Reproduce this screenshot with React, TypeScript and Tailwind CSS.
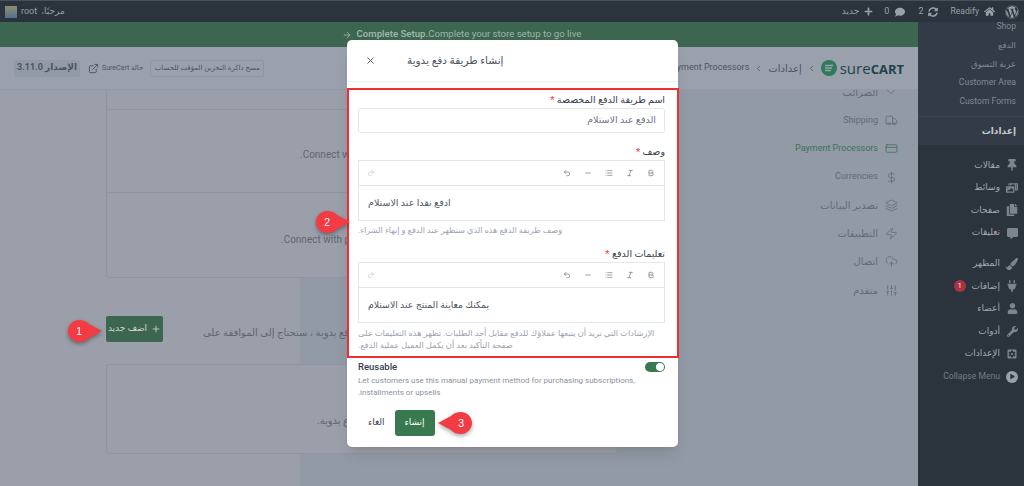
import { ArrowRight, Bold, CreditCard, DollarSign, ExternalLink, Italic, Layers, List, Minus, Plus, Redo2, SlidersVertical, Truck, Undo2, UploadCloud, X, Zap, ChevronLeft, ChevronDown } from 'lucide-react';
import { FaComment, FaCopy, FaHome, FaPaintBrush, FaPlay, FaPlug, FaPlus, FaPhotoVideo, FaSyncAlt, FaThumbtack, FaUser, FaWordpress, FaWrench, FaCommentAlt } from 'react-icons/fa';
import { MdSettingsApplications } from 'react-icons/md';

const font = 'font-["Roboto","DejaVu_Sans",sans-serif]';

const subMenu = [
  { label: 'Shop', cls: 'text-[8.6px]' },
  { label: 'الدفع', cls: 'text-[8.5px]' },
  { label: 'عربة التسوق', cls: 'text-[8.5px]' },
  { label: 'Customer Area', cls: 'text-[8.6px]' },
  { label: 'Custom Forms', cls: 'text-[8.6px]' },
];

const mainMenu = [
  { label: 'مقالات', icon: <FaThumbtack size={12} />, gap: false },
  { label: 'وسائط', icon: <FaPhotoVideo size={12} />, gap: false },
  { label: 'صفحات', icon: <FaCopy size={12} />, gap: false },
  { label: 'تعليقات', icon: <FaCommentAlt size={11} />, gap: false },
  { label: 'المظهر', icon: <FaPaintBrush size={12} />, gap: true },
  { label: 'إضافات', icon: <FaPlug size={12} />, gap: false, badge: true },
  { label: 'أعضاء', icon: <FaUser size={11} />, gap: false },
  { label: 'أدوات', icon: <FaWrench size={11} />, gap: false },
  { label: 'الإعدادات', icon: <MdSettingsApplications size={14} />, gap: false },
];

const navItems = [
  { label: 'الضرائب', icon: <ChevronDown size={16} strokeWidth={1.4} /> },
  { label: 'Shipping', icon: <Truck size={13} strokeWidth={1.5} />, latin: true },
  { label: 'Payment Processors', icon: <CreditCard size={13} strokeWidth={1.5} />, active: true, latin: true },
  { label: 'Currencies', icon: <DollarSign size={13} strokeWidth={1.5} />, latin: true },
  { label: 'تصدير البيانات', icon: <Layers size={13} strokeWidth={1.5} /> },
  { label: 'التطبيقات', icon: <Zap size={13} strokeWidth={1.5} /> },
  { label: 'اتصال', icon: <UploadCloud size={13} strokeWidth={1.5} /> },
  { label: 'متقدم', icon: <SlidersVertical size={13} strokeWidth={1.5} /> },
];

function Toolbar() {
  return (
    <div className="flex items-center h-[25px] border-b border-[#e5e7eb] pl-[8px] pr-[9px] text-[#6b7280]">
      <Redo2 size={8} strokeWidth={2} className="text-[#c4c8cf]" />
      <div className="ml-auto flex items-center gap-[13px]">
        <Undo2 size={8} strokeWidth={2} />
        <Minus size={8} strokeWidth={2} />
        <List size={8} strokeWidth={2} />
        <Italic size={8} strokeWidth={2} />
        <Bold size={8} strokeWidth={2} />
      </div>
    </div>
  );
}

function Label({ text }: { text: string }) {
  return (
    <div dir="rtl" className="text-[9.5px] leading-[14px] font-medium text-[#374151]">
      {text} <span className="text-[#ef4444]">*</span>
    </div>
  );
}

function Pin({ n, className, flip }: { n: string; className: string; flip?: boolean }) {
  return (
    <div className={`absolute z-30 w-[36px] h-[24px] drop-shadow-[0_2px_2px_rgba(0,0,0,0.35)] ${className}`}>
      <svg width="36" height="24" viewBox="0 0 36 24" className={flip ? '-scale-x-100' : ''}>
        <path d="M12 1C16 1 19 2 22 5L35 12L22 19C19 22 16 23 12 23C6 23 1 18 1 12C1 6 6 1 12 1Z" fill="#f23b43" />
      </svg>
      <span className={`absolute top-0 h-[24px] w-[24px] flex items-center justify-center text-white text-[11px] font-['Liberation_Sans',sans-serif] ${flip ? 'right-0' : 'left-0'}`}>
        {n}
      </span>
    </div>
  );
}

export default function App() {
  return (
    <div className={`relative w-[1024px] h-[486px] overflow-hidden flex flex-col bg-[#9a9fa9] ${font}`}>
      {/* admin bar */}
      <div className="relative z-10 h-[22px] shrink-0 flex items-center bg-[#2b333d] border-t border-[#48505a] text-[#98a0a8] text-[9px]">
        <div className="flex items-center gap-[4px] pl-[5px]">
          <div className="w-[12px] h-[12px] bg-gradient-to-b from-[#8f8f6e] to-[#54708c]" />
          <span>root</span>
          <span dir="rtl">مرحبًا،</span>
        </div>
        <div className="ml-auto flex items-center pr-[5px]">
          <span dir="rtl" className="mr-[5px]">جديد</span>
          <FaPlus size={9} className="mr-[11px]" />
          <span className="mr-[6px]">0</span>
          <FaComment size={10} className="mr-[13px]" />
          <span className="mr-[5px]">2</span>
          <FaSyncAlt size={10} className="mr-[12px]" />
          <span className="mr-[5px] text-[8.6px]">Readify</span>
          <FaHome size={11} className="mr-[10px]" />
          <FaWordpress size={14} />
        </div>
      </div>

      <div className="flex flex-1 min-h-0">
        <div className="flex-1 min-w-0 flex flex-col">
          {/* setup banner */}
          <div className="h-[25px] shrink-0 bg-[#3c6650] flex items-center justify-center gap-[5px] pl-[5px] text-[9.6px] text-[#9fb5a9]">
            <ArrowRight size={10} />
            <span><b className="font-semibold">Complete Setup.</b>Complete your store setup to go live</span>
          </div>

          {/* header */}
          <div className="relative z-10 h-[43px] shrink-0 flex items-center bg-[#9aa1ac] border-b border-[#949aa5] pl-[14px] pr-[14px] text-[#4d5560]">
            <span dir="rtl" className="h-[17px] w-[66px] flex items-center justify-center rounded-[2px] bg-[#929aa6] text-[9px] font-bold">الإصدار 3.11.0</span>
            <ExternalLink size={11} className="ml-[8px]" />
            <span dir="rtl" className="ml-[3px] text-[7px]">حالة SureCart</span>
            <span dir="rtl" className="ml-[7px] h-[17px] w-[114px] flex items-center justify-center border border-[#8e95a1] rounded-[2px] text-[7px]">مسح ذاكرة التخزين المؤقت للحساب</span>
            <div className="ml-auto flex items-center text-[10px]">
              <span className="text-[9px]">Payment Processors</span>
              <ChevronLeft size={9} className="mx-[5px]" />
              <span dir="rtl">إعدادات</span>
              <ChevronLeft size={9} className="mx-[5px]" />
              <svg width="16" height="16" viewBox="0 0 16 16">
                <circle cx="8" cy="8" r="8" fill="#2f7a57" />
                <path d="M4 5.5H12M4 8H11M4 10.5H10" stroke="#9aa1ac" strokeWidth="1.4" />
              </svg>
              <span className="ml-[3px] text-[15px] leading-none text-[#21414c] font-['Open_Sans',sans-serif]">sure<b className="font-bold text-[13px]">CART</b></span>
            </div>
          </div>

          <div className="flex flex-1 min-h-0 bg-[#929aa5]">
            {/* cards column, runs under the modal */}
            <div className="w-[300px] shrink-0 bg-[#9a9fa9] pl-[106px] text-[9.5px] text-[#5f6672]">
              <div className="w-[512px]">
                <div className="h-[188px] border border-t-0 border-[#8f95a0] rounded-b-[3px] flex flex-col bg-[#9a9fa9]">
                  <div className="h-[20px] border-b border-[#8f95a0]" />
                  <div className="h-[83px] border-b border-[#8f95a0] flex items-center pl-[193px] pt-[7px] text-[10px]">.Connect with Stripe</div>
                  <div className="flex-1 flex pl-[174px] pt-[39px] text-[10px]">.Connect with paypal</div>
                </div>
                <div className="h-[86px] pt-[16px] flex items-center">
                  <button className="w-[57px] h-[26px] flex items-center justify-center gap-[4px] rounded-[2px] bg-[#3c6650] text-[#cfd6d2] text-[9px]">
                    <span dir="rtl">اضف جديد</span>
                    <Plus size={10} />
                  </button>
                  <span dir="rtl" className="ml-[40px] mt-[7px] text-[10px]">دفع يدوية ، ستحتاج إلى الموافقة على</span>
                </div>
                <div className="h-[90px] border border-[#8f95a0] rounded-[3px] bg-[#9a9fa9] flex items-center pl-[210px] pt-[23px] text-[10px]">
                  <span dir="rtl">ع يدوية.</span>
                </div>
              </div>
            </div>

            {/* settings nav */}
            <div className="ml-auto -mt-[12px] pr-[20px] flex flex-col text-[#646b77] text-[10px]">
              {navItems.map((item) => (
                <div key={item.label} className={`h-[28.3px] shrink-0 flex items-center justify-end gap-[6px] ${item.active ? 'text-[#40705c]' : ''}`}>
                  <span className={item.latin ? 'text-[9px]' : ''} dir="auto">{item.label}</span>
                  <span className="w-[14px] flex justify-center">{item.icon}</span>
                </div>
              ))}
            </div>
          </div>
        </div>

        {/* wp sidebar */}
        <div className="w-[106px] shrink-0 flex flex-col bg-[#2b333d] text-[9px] text-[#a3a9b0]">
          <div className="h-[123px] shrink-0 bg-[#333b46] flex flex-col">
            <div className="-mt-[5px] h-[99px] pr-[8px] text-[#828992] flex flex-col">
              {subMenu.map((s) => (
                <div key={s.label} className={`h-[18.8px] shrink-0 flex items-center justify-end ${s.cls}`}>
                  <span dir="auto">{s.label}</span>
                </div>
              ))}
            </div>
            <div className="border-t border-[#3c444f] flex-1 flex items-center justify-end pr-[8px] pt-[1px] text-[#c6cacf] font-bold">
              <span dir="rtl">إعدادات</span>
            </div>
          </div>
          <div className="pt-[9px] flex flex-col">
            {mainMenu.map((m) => (
              <div key={m.label} className={`h-[22.6px] shrink-0 flex items-center justify-end gap-[6px] pr-[6px] ${m.gap ? 'mt-[8px]' : ''}`}>
                {m.badge && <span className="w-[12px] h-[12px] rounded-full bg-[#a8343f] text-white text-[7px] flex items-center justify-center">1</span>}
                <span dir="rtl" className="font-medium">{m.label}</span>
                <span className="w-[12px] flex justify-center text-[#7d848d]">{m.icon}</span>
              </div>
            ))}
            <div className="h-[22.6px] flex items-center justify-end gap-[6px] pr-[6px] text-[#757c86] text-[8.6px]">
              <span>Collapse Menu</span>
              <span className="w-[12px] h-[12px] rounded-full bg-[#9aa0a7] flex items-center justify-center">
                <FaPlay size={5} className="text-[#2b333d]" />
              </span>
            </div>
          </div>
        </div>
      </div>

      {/* modal */}
      <div className="absolute z-20 left-[347px] top-[40px] w-[331px] h-[407px] bg-white rounded-[5px] shadow-lg flex flex-col text-[#4b5563]">
        <div className="h-[42px] shrink-0 border-b border-[#eceef1] flex items-center pl-[18px]">
          <X size={11} className="text-[#4b5563]" />
          <span dir="rtl" className="ml-[31px] text-[10.5px]">إنشاء طريقة دفع يدوية</span>
        </div>
        <div className="pl-[11px] pr-[13px] pt-[11px] flex flex-col">
          <Label text="اسم طريقة الدفع المخصصة" />
          <div dir="rtl" className="mt-[1px] h-[25px] border border-[#e5e7eb] rounded-[3px] flex items-center px-[8px] text-[9.5px] text-[#6b7280]">الدفع عند الاستلام</div>
          <div className="mt-[12px]"><Label text="وصف" /></div>
          <div className="mt-[1px] h-[61px] border border-[#e5e7eb] flex flex-col">
            <Toolbar />
            <div dir="rtl" className="flex-1 pl-[9px] flex items-center text-[9.5px] text-[#4b5563]">
              <span className="w-full text-left">ادفع نقدا عند الاستلام</span>
            </div>
          </div>
          <div dir="rtl" className="mt-[3px] text-[8.2px] leading-[12px] text-[#9ca3af] text-left">وصف طريقة الدفع هذه الذي ستظهر عند الدفع و إنهاء الشراء.</div>
          <div className="mt-[11px]"><Label text="تعليمات الدفع" /></div>
          <div className="mt-[1px] h-[61px] border border-[#e5e7eb] flex flex-col">
            <Toolbar />
            <div dir="rtl" className="flex-1 pl-[9px] flex items-center text-[9.3px] text-[#4b5563]">
              <span className="w-full text-left">يمكنك معاينة المنتج عند الاستلام</span>
            </div>
          </div>
          <div dir="rtl" className="mt-[5px] text-[8.3px] leading-[11.5px] text-[#9ca3af] text-left">الإرشادات التي تريد أن يتبعها عملاؤك للدفع مقابل أحد الطلبات. تظهر هذه التعليمات على صفحة التأكيد بعد أن يكمل العميل عملية الدفع.</div>
          <div className="mt-[9px] flex items-center justify-between">
            <span className="text-[9.5px] leading-[13px] font-medium text-[#374151]">Reusable</span>
            <span className="w-[20px] h-[10px] rounded-full bg-[#38794f] flex items-center justify-end pr-[1px]">
              <span className="w-[8px] h-[8px] rounded-full bg-white" />
            </span>
          </div>
          <div className="mt-[2px] text-[8px] leading-[11.5px] text-[#8b929d]">
            Let customers use this manual payment method for purchasing subscriptions,<br />.installments or upsells
          </div>
          <div className="mt-[12px] flex items-center">
            <span dir="rtl" className="ml-[10px] text-[9px] font-medium text-[#374151]">الغاء</span>
            <button className="ml-[10px] w-[40px] h-[26px] rounded-[3px] bg-[#38794f] text-white text-[9px] flex items-center justify-center font-medium">
              <span dir="rtl">إنشاء</span>
            </button>
          </div>
        </div>
      </div>

      {/* annotations */}
      <div className="absolute z-30 left-[347px] top-[88px] w-[332px] h-[270px] border-2 border-[#ee2e33] pointer-events-none" />
      <Pin n="1" className="left-[67px] top-[319px]" />
      <Pin n="2" className="left-[315px] top-[210px]" />
      <Pin n="3" flip className="left-[437px] top-[411px]" />
    </div>
  );
}
